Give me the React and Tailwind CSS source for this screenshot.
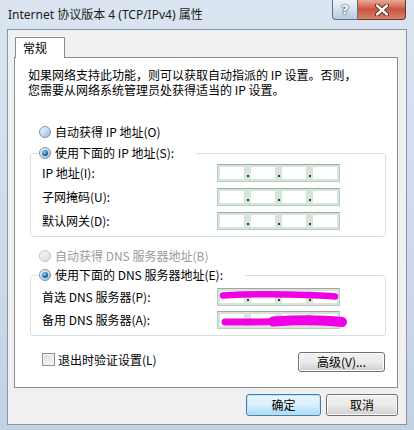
import React from "react";

const body = "font-['Noto_Sans_CJK_SC','Noto_Sans',sans-serif]";

function Radio({ checked, disabled }) {
  if (disabled) {
    return (
      <span className="inline-flex h-[12px] w-[12px] shrink-0 rounded-full border border-[#c4c4c4] bg-gradient-to-br from-[#f7f7f7] to-[#dedede]" />
    );
  }
  return (
    <span className="inline-flex h-[12px] w-[12px] shrink-0 items-center justify-center rounded-full border border-[#7f93a8] bg-gradient-to-br from-[#eef5fb] via-[#c9def0] to-[#8fb6da]">
      {checked && (
        <span className="h-[6px] w-[6px] rounded-full bg-[radial-gradient(circle_at_40%_35%,#9ad8f7,#1f66a3_55%,#0b355f)]" />
      )}
    </span>
  );
}

function IpField({ children }) {
  const cells = [0, 1, 2, 3];
  return (
    <div className="relative flex h-[18px] w-[123px] shrink-0 border border-[#bfcac4] border-t-[#9ea9a3] bg-[#d4e6da] p-[2px]">
      {cells.map((i) => (
        <React.Fragment key={i}>
          {i > 0 && (
            <span className="flex w-[7px] items-end justify-center pb-[2px]">
              <span className="h-[2px] w-[2px] bg-[#3a3a3a]" />
            </span>
          )}
          <span className="flex-1 bg-white" />
        </React.Fragment>
      ))}
      {children}
    </div>
  );
}

function Row({ label, children }) {
  return (
    <div className="flex h-[18px] items-center pl-[11px]">
      <span className="w-[175px]">{label}</span>
      {children}
    </div>
  );
}

function Button({ children, primary, className = "" }) {
  return (
    <div
      className={`flex items-center justify-center rounded-[3px] border ${
        primary
          ? "border-[#3c7fb1] bg-gradient-to-b from-[#eaf6fd] via-[#d9f0fc] to-[#a7d9f5] shadow-[inset_0_0_0_1px_#bfe4f8]"
          : "border-[#707070] bg-gradient-to-b from-[#f2f2f2] via-[#ebebeb] to-[#cfcfcf] shadow-[inset_0_0_0_1px_#fcfcfc]"
      } ${className}`}
    >
      {children}
    </div>
  );
}

export default function App() {
  return (
    <div
      className={`h-[430px] w-[414px] overflow-hidden bg-gradient-to-b from-[#dae5f1] via-[#cfdcea] to-[#c2d2e3] text-[12px] text-black ${body}`}
    >
      {/* title bar */}
      <div className="flex h-[29px] items-start">
        <div className="pl-[8px] pt-[6px] font-['Noto_Sans','Noto_Sans_CJK_SC',sans-serif] text-[12px] leading-[18px] text-[#1a1a1a]">
          Internet 协议版本 4 (TCP/IPv4) 属性
        </div>
        <div className="ml-auto mr-[8px] flex h-[20px]">
          <div className="flex w-[26px] items-center justify-center rounded-bl-[4px] border border-t-0 border-[#5f7083] bg-gradient-to-b from-[#eef3f8] via-[#d5e0ec] to-[#b9cadd] font-['DejaVu_Sans',sans-serif] text-[13px] font-bold text-white [text-shadow:0_0_2px_#253a52,0_0_1px_#253a52]">
            ?
          </div>
          <div className="flex w-[48px] items-center justify-center rounded-br-[4px] border border-l-0 border-t-0 border-[#5f3a33] bg-gradient-to-b from-[#e9a897] via-[#c9533e] to-[#d9826b]">
            <svg width="14" height="12" viewBox="0 0 14 12">
              <path
                d="M2 1.5 L12 10.5 M12 1.5 L2 10.5"
                stroke="#4a1c14"
                strokeWidth="4.2"
                strokeLinecap="round"
              />
              <path
                d="M2 1.5 L12 10.5 M12 1.5 L2 10.5"
                stroke="#ffffff"
                strokeWidth="2.4"
                strokeLinecap="round"
              />
            </svg>
          </div>
        </div>
      </div>

      {/* dialog */}
      <div className="mx-[7px] flex h-[396px] flex-col border border-[#8596a8] bg-[#f0f0f0]">
        {/* tab strip */}
        <div className="flex pl-[7px] pt-[7px]">
          <div className="relative z-10 -mb-px flex h-[21px] w-[50px] items-center border border-b-0 border-[#898c95] bg-white pl-[7px]">
            常规
          </div>
        </div>

        {/* tab panel */}
        <div className="ml-[6px] flex h-[331px] w-[384px] flex-col border border-[#898c95] bg-white">
          <div className="pl-[13px] pt-[9px] leading-[15px]">
            <div>如果网络支持此功能，则可以获取自动指派的 IP 设置。否则，</div>
            <div>您需要从网络系统管理员处获得适当的 IP 设置。</div>
          </div>

          <div className="mt-[26px] flex h-[18px] items-center gap-[4px] pl-[24px]">
            <Radio />
            <span>自动获得 IP 地址(O)</span>
          </div>

          <fieldset className="ml-[15px] mt-[3px] w-[356px] rounded-[3px] border border-[#d5dfe5] pb-[6px]">
            <legend className="ml-[7px] flex h-[18px] items-center gap-[4px] pl-[1px] pr-[22px]">
              <Radio checked />
              <span>使用下面的 IP 地址(S):</span>
            </legend>
            <div className="flex flex-col gap-[6px] pt-[2px]">
              <Row label="IP 地址(I):">
                <IpField />
              </Row>
              <Row label="子网掩码(U):">
                <IpField />
              </Row>
              <Row label="默认网关(D):">
                <IpField />
              </Row>
            </div>
          </fieldset>

          <div className="mt-[10px] flex h-[18px] items-center gap-[4px] pl-[24px] text-[#9a9a9a]">
            <Radio disabled />
            <span>自动获得 DNS 服务器地址(B)</span>
          </div>

          <fieldset className="ml-[15px] mt-[1px] w-[356px] rounded-[3px] border border-[#d5dfe5] pb-[6px]">
            <legend className="ml-[7px] flex h-[18px] items-center gap-[4px] pl-[1px] pr-[22px]">
              <Radio checked />
              <span>使用下面的 DNS 服务器地址(E):</span>
            </legend>
            <div className="flex flex-col gap-[5px] pt-[4px]">
              <Row label="首选 DNS 服务器(P):">
                <IpField>
                  <svg
                    className="absolute left-0 top-0 overflow-visible"
                    width="123"
                    height="18"
                  >
                    <path
                      d="M5 6.5 Q30 4.5 70 5.5 T117 7.5"
                      stroke="#f000e6"
                      strokeWidth="6.5"
                      strokeLinecap="round"
                      fill="none"
                    />
                  </svg>
                </IpField>
              </Row>
              <Row label="备用 DNS 服务器(A):">
                <IpField>
                  <svg
                    className="absolute left-0 top-0 overflow-visible"
                    width="123"
                    height="18"
                  >
                    <path
                      d="M7 10 Q40 10 70 9.5 T124 10"
                      stroke="#f000e6"
                      strokeWidth="7"
                      strokeLinecap="round"
                      fill="none"
                    />
                    <path
                      d="M55 9.5 Q95 7 124 10"
                      stroke="#f000e6"
                      strokeWidth="10"
                      strokeLinecap="round"
                      fill="none"
                    />
                  </svg>
                </IpField>
              </Row>
            </div>
          </fieldset>

          <div className="mt-[16px] flex items-start pl-[27px] pr-[12px]">
            <span className="mt-[1px] h-[13px] w-[13px] border border-[#8f8f8f] bg-gradient-to-br from-[#dcdcdc] to-[#f8f8f8] shadow-[inset_0_0_0_1px_#f4f4f4]" />
            <span className="ml-[3px] leading-[15px]">退出时验证设置(L)</span>
            <Button className="ml-auto h-[20px] w-[87px]">高级(V)...</Button>
          </div>
        </div>

        {/* bottom buttons */}
        <div className="mr-[8px] mt-[6px] flex justify-end gap-[5px]">
          <Button primary className="h-[22px] w-[75px]">
            确定
          </Button>
          <Button className="h-[22px] w-[72px]">取消</Button>
        </div>
      </div>
    </div>
  );
}
